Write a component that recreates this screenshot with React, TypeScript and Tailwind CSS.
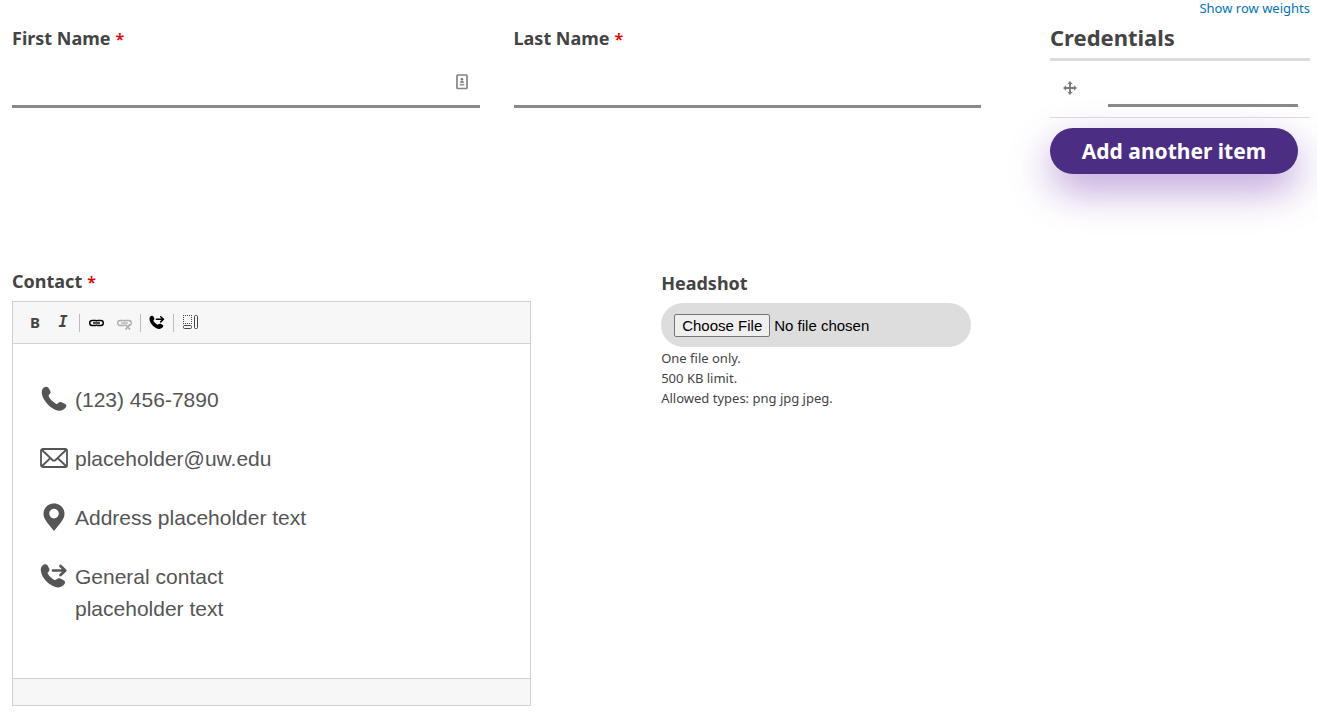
import React from "react";

const Required = () => <span className="ml-[5px] text-base leading-none font-semibold text-[#e00000]">*</span>;

function HandsetIcon({ className }: { className?: string }) {
  return (
    <svg viewBox="0 0 26 26" className={className} fill="currentColor" aria-hidden="true">
      <path d="M2.800 1.600C4.400.3 6.300.3 7.400 1.700L9.300 5C9.900 6.300 9.500 7.400 8.500 8.200C7.500 9 7.400 9.800 7.900 10.800C9.300 13.300 11.800 15.900 14.400 17.500C15.500 18.200 16.400 17.900 17.200 17C18.100 16 19.200 15.700 20.500 16.200L24.200 18C25.600 18.900 25.700 20.300 24.700 21.600C22.700 24.200 19.700 25.500 16.300 24.400C9 22 2.400 15.200.9 7.900C.4 5.500 1 3.200 2.800 1.600Z" />
    </svg>
  );
}

function ForwardCallIcon({ className }: { className?: string }) {
  return (
    <svg viewBox="0 0 28 26" className={className} aria-hidden="true">
      <path
        fill="currentColor"
        d="M2.700 2.200C4.400.9 6.500 1 7.600 2.500L9.200 5.400C9.800 6.800 9.400 7.900 8.400 8.700C7.500 9.400 7.500 10.200 8 11.100C9.400 13.500 11.500 15.400 14 16.700C15 17.200 16 17 16.800 16.200C17.800 15.200 19 14.900 20.400 15.500L24 17.400C25.400 18.300 25.400 19.800 24.300 21.200C22.100 24 18.900 25 15.500 24C8.500 21.900 2.200 15.400.9 8.300C.5 5.900 1 3.600 2.700 2.200Z"
      />
      <path fill="none" stroke="currentColor" strokeWidth="2.700" strokeLinecap="round" strokeLinejoin="round" d="M13 7.500H25M20.500 3L25.300 7.500L20.500 12" />
    </svg>
  );
}

function MailIcon() {
  return (
    <svg viewBox="0 0 28 20" className="w-7" fill="none" stroke="currentColor" strokeWidth="1.800" strokeLinejoin="round" aria-hidden="true">
      <rect x="1" y="1" width="26" height="18" rx="1.800" />
      <path d="M2 2L12.500 12Q14 13.300 15.500 12L26 2M2 18L10.500 10M26 18L17.500 10" />
    </svg>
  );
}

function PinIcon() {
  return (
    <svg viewBox="0 0 22 28" className="h-7" fill="currentColor" aria-hidden="true">
      <path fillRule="evenodd" d="M11 .5C5 .5.500 5 .500 11C.5 14.500 2.300 16.800 4.300 19.700L11 28L17.700 19.700C19.700 16.800 21.500 14.500 21.500 11C21.500 5 17 .5 11 .5ZM11 5.800A4.800 4.800 0 1 1 11 15.400A4.800 4.800 0 1 1 11 5.800Z" />
    </svg>
  );
}

const Chain = () => (
  <>
    <path d="M7 4.500H3.200A2.500 2.500 0 0 0 3.200 9.500H6.500Q7.500 9.500 8 8.700" />
    <path d="M8 9.500H11.800A2.500 2.500 0 0 0 11.800 4.500H8.500Q7.500 4.500 7 5.300" />
    <path d="M4 7H11" />
  </>
);

function ToolButton({ label, children }: { label: string; children: React.ReactNode }) {
  return (
    <button type="button" aria-label={label} className="flex h-6 w-7 items-center justify-center">
      {children}
    </button>
  );
}

const Separator = () => <span className="mx-[2px] h-[18px] w-px bg-[#bcbcbc]" />;

function ContactRow({ icon, children }: { icon: React.ReactNode; children: React.ReactNode }) {
  return (
    <div className="flex">
      <span className="mr-[7px] flex h-[30px] w-7 items-center justify-center">{icon}</span>
      <p>{children}</p>
    </div>
  );
}

export default function App() {
  return (
    <form className="pr-[7px] pl-3 font-['Noto_Sans','Lucida_Grande',sans-serif] text-[#444]">
      <div className="grid h-[269px] grid-cols-[969fr_260fr] gap-[69px]">
        <div className="grid grid-cols-2 items-start gap-[34px] pt-[26px]">
          <div>
            <label htmlFor="first" className="block text-[18px] leading-6 font-bold">First Name<Required /></label>
            <div className="mt-2 flex h-[50px] items-center border-b-3 border-[#888a8a]">
              <input id="first" className="h-full min-w-0 flex-1 outline-none" />
              <svg viewBox="0 0 12 16" className="mr-3 h-4 w-3" aria-hidden="true">
                <rect x="1" y="1" width="10" height="13.500" rx=".8" fill="#fff" stroke="#858585" strokeWidth="1.700" />
                <circle cx="6" cy="5.300" r="1.300" fill="#777" />
                <path d="M3.600 8.800Q6 4.800 8.400 8.800Z" fill="#777" />
                <path d="M3.700 10.700H8.300" stroke="#999" strokeWidth="1.700" />
              </svg>
            </div>
          </div>
          <div>
            <label htmlFor="last" className="block text-[18px] leading-6 font-bold">Last Name<Required /></label>
            <div className="mt-2 flex h-[50px] border-b-3 border-[#888a8a]">
              <input id="last" className="min-w-0 flex-1 outline-none" />
            </div>
          </div>
        </div>

        <div>
          <a href="#weights" className="block text-right text-[13px] leading-4 text-[#0074bd]">Show row weights</a>
          <table className="mt-[7px] w-full border-collapse">
            <thead>
              <tr className="border-b-3 border-[#dcdcdc]">
                <th colSpan={2} className="pb-[7px] text-left text-[22px] leading-7 font-bold">Credentials</th>
              </tr>
            </thead>
            <tbody>
              <tr className="border-b border-[#e0dde3]">
                <td className="w-[58px] pb-[2px] pl-[13px] align-middle">
                  <svg viewBox="0 0 14 14" className="h-[14px] w-[14px]" fill="#777" aria-label="Drag to re-order">
                    <path d="M7 0L9.500 3H7.900V6.100H11V4.500L14 7L11 9.500V7.900H7.900V11H9.500L7 14L4.500 11H6.100V7.900H3V9.500L0 7L3 4.500V6.100H6.100V3H4.500Z" />
                  </svg>
                </td>
                <td className="pr-3 pb-[10px]">
                  <input aria-label="Credentials" className="block h-[46px] w-full border-b-3 border-[#888a8a] outline-none" />
                </td>
              </tr>
            </tbody>
          </table>
          <button type="button" className="mt-[10px] h-[46px] w-[248px] rounded-full bg-[#4b2e83] pt-[2px] text-[21px] font-bold whitespace-nowrap text-white shadow-[0_16px_40px_rgba(90,20,160,0.4)]">
            Add another item
          </button>
        </div>
      </div>

      <div className="flex items-start gap-[130px]">
        <div className="w-2/5">
          <div id="contact" className="text-[18px] leading-6 font-bold">Contact<Required /></div>
          <div className="mt-2 border border-[#d1d1d1]">
            <div className="flex h-[42px] items-center border-b border-[#d1d1d1] bg-[#f7f7f7] pl-2">
              <ToolButton label="Bold"><b className="text-[15px]">B</b></ToolButton>
              <ToolButton label="Italic"><b className="font-['DejaVu_Sans_Mono',monospace] text-[15px] italic">I</b></ToolButton>
              <Separator />
              <ToolButton label="Link">
                <svg viewBox="0 0 15 14" className="w-[15px]" fill="none" stroke="#000" strokeWidth="1.400"><Chain /></svg>
              </ToolButton>
              <ToolButton label="Unlink">
                <svg viewBox="0 0 15 14" className="w-[15px]" fill="none" stroke="#adadad" strokeWidth="1.300"><Chain /><path stroke="#f7f7f7" strokeWidth="3" d="M9 8.500L13 13" /><path strokeWidth="1.600" d="M8.500 8.500L13 13.500M13 8.500L8.500 13.500" /></svg>
              </ToolButton>
              <Separator />
              <ToolButton label="Contact icon"><ForwardCallIcon className="w-4 text-black" /></ToolButton>
              <Separator />
              <ToolButton label="Show blocks">
                <svg viewBox="0 0 15 15" className="w-[15px]" fill="none" stroke="#444">
                  <path strokeDasharray="1 1" d="M0 .5H9M0 8.500H9M.5 0V9M8.500 0V9" />
                  <rect x="11.500" y=".5" width="3" height="13" rx="1" />
                  <rect x=".5" y="10.500" width="8" height="3" rx="1" />
                </svg>
              </ToolButton>
            </div>
            <div
              role="textbox"
              aria-labelledby="contact"
              aria-multiline="true"
              className="flex h-[334px] flex-col gap-[27px] pt-10 pl-[27px] font-['Liberation_Sans',Arial,sans-serif] text-[21px] leading-8 text-[#555]"
            >
              <ContactRow icon={<HandsetIcon className="w-[26px]" />}>(123) 456-7890</ContactRow>
              <ContactRow icon={<MailIcon />}>placeholder@uw.edu</ContactRow>
              <ContactRow icon={<PinIcon />}>Address placeholder text</ContactRow>
              <ContactRow icon={<ForwardCallIcon className="w-7" />}>General contact<br />placeholder text</ContactRow>
            </div>
            <div className="h-[27px] border-t border-[#d1d1d1] bg-[#f7f7f7]" />
          </div>
        </div>

        <div className="pt-[2px]">
          <label htmlFor="headshot" className="block text-[18px] leading-6 font-bold">Headshot</label>
          <input
            id="headshot"
            type="file"
            className="mt-2 block h-11 w-[310px] rounded-full bg-[#ddd] py-[11px] pl-[13px] font-['Liberation_Sans',Arial,sans-serif] text-[15px] leading-[21px] text-black file:mr-1 file:h-[23px] file:rounded-[2px] file:border file:border-solid file:border-[#767676] file:bg-[#efefef] file:px-[7px]"
          />
          <div className="mt-px text-[13px] leading-5">
            <p>One file only.</p>
            <p>500 KB limit.</p>
            <p>Allowed types: png jpg jpeg.</p>
          </div>
        </div>
      </div>
    </form>
  );
}
